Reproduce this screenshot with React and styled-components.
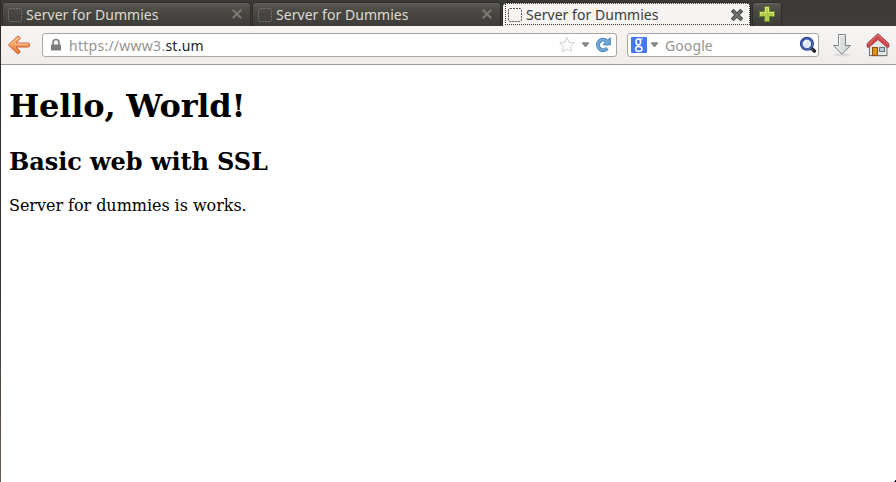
import React from "react";
import styled, { createGlobalStyle } from "styled-components";

const GlobalStyle = createGlobalStyle`
  * { box-sizing: border-box; }
  body { margin: 0; background: #fff; overflow: hidden; }
  svg { display: block; flex: none; }
`;

const Window = styled.div`
  width: 896px;
  height: 482px;
  display: flex;
  flex-direction: column;
  position: relative;
  font-family: "Noto Sans", "Open Sans", sans-serif;
  font-size: 14px;
  background: #fff;
  overflow: hidden;
`;

const TabStrip = styled.div`
  height: 26px;
  flex: none;
  display: flex;
  align-items: flex-end;
  gap: 3px;
  padding-left: 3px;
  background: linear-gradient(#3b3a36, #3d3c38);
`;

const Tab = styled.div`
  width: 247px;
  height: 23px;
  flex: none;
  display: flex;
  align-items: center;
  padding: 0 6px 0 5px;
  border-radius: 4px 4px 0 0;
  color: ${(p) => (p.$active ? "#3c3b37" : "#dfdbd2")};
  background: ${(p) => (p.$active ? "#f6f5f4" : "linear-gradient(#595751, #474641 45%, #3e3d39)")};
  box-shadow: ${(p) =>
    p.$active ? "0 0 0 1px #2b2a27" : "0 0 0 1px #2d2c29, inset 0 1px 0 #68665f"};
`;

const ActiveTab = styled(Tab)`
  padding: 0 0 1px 2px;
`;

const FocusRing = styled.div`
  width: 245px;
  height: 22px;
  display: flex;
  align-items: center;
  padding: 1px 5px 0 2px;
  border: 1px dotted #3c3b37;
`;

const TabTitle = styled.span`
  flex: 1;
  margin-left: 4px;
  line-height: 20px;
  letter-spacing: 0.04px;
  white-space: nowrap;
`;

const NewTab = styled.button`
  width: 28px;
  height: 23px;
  padding: 0 0 1px;
  border: 0;
  border-radius: 4px 4px 0 0;
  display: flex;
  align-items: center;
  justify-content: center;
  background: linear-gradient(#595751, #474641 45%, #3e3d39);
  box-shadow: 0 0 0 1px #2d2c29, inset 0 1px 0 #68665f;
`;

const Toolbar = styled.div`
  height: 39px;
  flex: none;
  display: flex;
  align-items: flex-start;
  padding: 7px 0 0 7px;
  background: linear-gradient(#f7f6f5, #efedec);
  border-bottom: 1px solid #9b9997;
`;

const Field = styled.div`
  width: ${(p) => p.$width}px;
  height: 24px;
  flex: none;
  display: flex;
  align-items: center;
  margin-left: ${(p) => p.$gap}px;
  padding: ${(p) => p.$pad};
  border: 1px solid #aaa6a2;
  border-radius: 3px;
  background: #fff;
  color: #969492;
`;

const FieldText = styled.span`
  flex: 1;
  margin-left: ${(p) => p.$gap}px;
  padding-top: 2px;
  line-height: 20px;
  letter-spacing: ${(p) => p.$spacing || 0}px;
  white-space: nowrap;
`;

const Domain = styled.span`
  color: #1e1e1e;
`;

const Actions = styled.div`
  display: flex;
  align-items: center;
  gap: ${(p) => p.$gap}px;
`;

const ToolButtons = styled.div`
  display: flex;
  gap: 13px;
  margin-left: 12px;
`;

const Page = styled.main`
  flex: 1;
  padding: 22px 8px 0 9px;
  background: #fff;
  color: #000;
  font-family: "DejaVu Serif", serif;
  font-size: 16px;
`;

const Title = styled.h1`
  margin: 0;
  font-size: 32px;
  line-height: 38px;
  letter-spacing: -0.17px;
`;

const Subtitle = styled.h2`
  margin: 22px 0 0;
  font-size: 24px;
  line-height: 29px;
  letter-spacing: -0.07px;
`;

const Text = styled.p`
  margin: 20px 0 0;
  line-height: 19px;
  letter-spacing: -0.04px;
`;

const WindowEdge = styled.div`
  position: absolute;
  left: 0;
  top: 0;
  width: 1px;
  height: 482px;
  background: linear-gradient(#2c2926, #362f2b 55%, #53483f 78%, #695d52);
`;

const Corner = styled.div`
  position: absolute;
  right: 0;
  bottom: 0;
`;

const Placeholder = ({ active }) => (
  <svg width="14" height="14" viewBox="0 0 14 14" fill="none">
    <rect x=".5" y=".5" width="13" height="13" rx="1.5" stroke={active ? "#55534f" : "#74726c"} strokeDasharray="2 1" />
  </svg>
);

const Cross = ({ active }) => (
  <svg width="14" height="14" viewBox="0 0 14 14" fill="none" strokeLinecap="square">
    {active && <path d="M3.6 3.6l6.8 6.8m0-6.8l-6.8 6.8" stroke="#444442" strokeWidth="4" />}
    <path
      d={active ? "M3.6 3.6l6.8 6.8m0-6.8l-6.8 6.8" : "M3.5 2.5l7 7m0-7l-7 7"}
      stroke={active ? "#737472" : "#7b7972"}
      strokeWidth="2.1"
    />
  </svg>
);

const Plus = () => (
  <svg width="16" height="16" viewBox="0 0 16 16">
    <path d="M5.5.5h5v5h5v5h-5v5h-5v-5h-5v-5h5z" fill="#b5c94b" stroke="#64882a" />
    <path d="M6.5 6.5v-5h3v5h5v3" fill="none" stroke="#d9e57f" />
    <path d="M1.5 9.5v-3h5" fill="none" stroke="#d6e276" />
  </svg>
);

const Back = () => (
  <svg width="24" height="24" viewBox="0 0 24 24">
    <defs>
      <linearGradient id="back" x1="0" y1="0" x2="0" y2="1">
        <stop offset="0" stopColor="#fbc391" />
        <stop offset=".5" stopColor="#f3a060" />
        <stop offset="1" stopColor="#e8732f" />
      </linearGradient>
    </defs>
    <path
      d="M1.4 12L10.2 3.6Q12.4 2.8 13.3 5.2L9 10H21.1Q22.7 10 22.7 12T21.1 14H9L13.1 18.3Q12.7 21 10.2 20.4Z"
      fill="url(#back)" stroke="#cd5b2e" strokeLinejoin="round"
    />
    <path d="M3 12L10.5 5M8 11H21" fill="none" stroke="#fdd3a8" strokeWidth=".8" />
  </svg>
);

const Lock = () => (
  <svg width="12" height="14" viewBox="0 0 12 14">
    <path d="M3.1 7V4.4a2.9 2.9 0 015.8 0V7" fill="none" stroke="#808080" strokeWidth="1.7" />
    <rect x="1" y="6.5" width="10" height="6" rx=".8" fill="#7c7c7c" />
  </svg>
);

const Star = () => (
  <svg width="18" height="18" viewBox="0 0 18 18">
    <path d="M9 1.5l2.2 4.7 5.1.6-3.8 3.4 1.1 5.4L9 13l-4.6 2.6 1.1-5.4-3.8-3.4 5.1-.6z" fill="#fff" stroke="#d0cfce" strokeLinejoin="round" />
  </svg>
);

const Caret = () => (
  <svg width="9" height="6" viewBox="0 0 9 6">
    <path d="M1.2.8h6.6L4.5 5z" fill="#8a8886" stroke="#73716f" strokeWidth=".8" strokeLinejoin="round" />
  </svg>
);

const Reload = () => (
  <svg width="16" height="16" viewBox="0 0 16 16">
    <path d="M12.2 11.3a5.2 5.2 0 11-.7-7.4" fill="none" stroke="#4a86bd" strokeWidth="4" />
    <path d="M15.3.8v7.1H8.4V7l2.3-2z" fill="#6ba4d3" stroke="#4a86bd" strokeLinejoin="round" />
    <path d="M12.1 11.2a5.2 5.2 0 11-.5-7.1l1.2.8" fill="none" stroke="#78a9d6" strokeWidth="2" />
  </svg>
);

const GoogleMark = () => (
  <svg width="16" height="16" viewBox="0 0 16 16" fill="none" stroke="#fff">
    <rect width="16" height="16" rx="1" fill="#4378f5" stroke="none" />
    <ellipse cx="7.3" cy="4.9" rx="2.3" ry="2.8" strokeWidth="1.5" />
    <path d="M7.5 2h4M9.4 2.8L10 4" strokeWidth="1.1" />
    <path d="M7.4 7.7Q6.7 8.7 8.5 9.5" strokeWidth="1.5" />
    <ellipse cx="7.8" cy="11.9" rx="3.2" ry="2.4" strokeWidth="1.5" />
  </svg>
);

const Search = () => (
  <svg width="18" height="18" viewBox="0 0 18 18">
    <path d="M12 12l3.4 3" stroke="#232426" strokeWidth="3.6" strokeLinecap="round" />
    <circle cx="7.9" cy="7.8" r="5.7" fill="#dfeaf7" stroke="#243a83" strokeWidth="2.7" />
    <circle cx="7.9" cy="7.8" r="5.6" fill="none" stroke="#4f70bf" strokeWidth="1.1" />
    <path d="M5 8.5a3 3 0 013-3.6" fill="none" stroke="#fff" strokeWidth="1.3" />
    <path d="M12.7 13l1 .9" stroke="#a1a2a4" />
  </svg>
);

const Download = () => (
  <svg width="22" height="24" viewBox="0 0 22 24">
    <defs>
      <linearGradient id="down">
        <stop offset="0" stopColor="#eceeed" />
        <stop offset="1" stopColor="#c9d0d0" />
      </linearGradient>
    </defs>
    <ellipse cx="11" cy="22" rx="8" ry="1.5" fill="#dcdbd9" />
    <path d="M7.5 1.5h7v11h5L11 21.3 2.5 12.5h5z" fill="url(#down)" stroke="#7c8584" strokeLinejoin="round" />
    <path d="M8.5 12.8V2.5h5" fill="none" stroke="#fff" />
  </svg>
);

const Home = () => (
  <svg width="24" height="24" viewBox="0 0 24 24">
    <ellipse cx="12" cy="22.5" rx="10" ry="1.3" fill="#cdcbc9" />
    <path d="M3.5 12L12 4l9 8v10.5h-17.5z" fill="#e6e8e7" stroke="#737573" />
    <rect x="6.5" y="14.5" width="5" height="8" fill="#d28a12" stroke="#8c5708" />
    <path d="M9.2 15v7" stroke="#e3a42c" />
    <rect x="13.5" y="14.5" width="5" height="4" fill="#b6cbd1" stroke="#66757a" />
    <path d="M12 .7L1.2 10.5V14L2.5 14.6 12 6.5l9.5 8.1 1.3-.6v-3.5z" fill="#cd4b4f" stroke="#ad3a40" strokeLinejoin="round" />
    <path d="M2.2 11L12 2l9.5 8.7" fill="none" stroke="#db7677" />
  </svg>
);

const TabContents = ({ active }) => (
  <>
    <Placeholder active={active} />
    <TabTitle>Server for Dummies</TabTitle>
    <Cross active={active} />
  </>
);

export default function App() {
  return (
    <Window>
      <GlobalStyle />
      <TabStrip>
        <Tab><TabContents /></Tab>
        <Tab><TabContents /></Tab>
        <ActiveTab $active>
          <FocusRing><TabContents active /></FocusRing>
        </ActiveTab>
        <NewTab aria-label="New tab"><Plus /></NewTab>
      </TabStrip>
      <Toolbar>
        <Back />
        <Field $width={575} $gap={11} $pad="0 5px 0 7px">
          <Lock />
          <FieldText $gap={7} $spacing={0.26}>https://www3.<Domain>st.um</Domain></FieldText>
          <Actions $gap={5}><Star /><Caret /><Reload /></Actions>
        </Field>
        <Field $width={192} $gap={10} $pad="0 1px 0 3px">
          <Actions $gap={3}><GoogleMark /><Caret /></Actions>
          <FieldText $gap={6} $spacing={0.1}>Google</FieldText>
          <Search />
        </Field>
        <ToolButtons><Download /><Home /></ToolButtons>
      </Toolbar>
      <Page>
        <Title>Hello, World!</Title>
        <Subtitle>Basic web with SSL</Subtitle>
        <Text>Server for dummies is works.</Text>
      </Page>
      <WindowEdge />
      <Corner>
        <svg width="2" height="2"><path d="M1 0h1v2H0V1h1z" fill="#25232b" /></svg>
      </Corner>
    </Window>
  );
}
